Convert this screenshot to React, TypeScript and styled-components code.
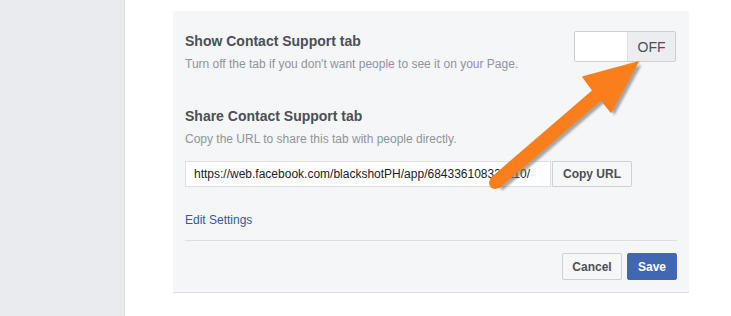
import React, { FC } from "react";
import styled, { createGlobalStyle } from "styled-components";

const GlobalStyle = createGlobalStyle`
  html, body {
    margin: 0;
    padding: 0;
    background: #fff;
    font-family: "Liberation Sans", Arial, Helvetica, sans-serif;
  }
`;

const Page = styled.div`
  position: relative;
  display: flex;
  width: 731px;
  height: 316px;
  overflow: hidden;
`;

const Sidebar = styled.div`
  width: 124px;
  flex-shrink: 0;
  background: #e9ebee;
  border-right: 1px solid #dddfe2;
`;

const Main = styled.div`
  padding: 11px 0 0 48px;
`;

const Panel = styled.div`
  width: 492px;
  padding: 20px 12px 12px;
  background: #f5f6f7;
  border-bottom: 1px solid #dddfe2;
`;

const Row = styled.div`
  display: flex;
  justify-content: space-between;
  align-items: flex-start;
`;

const Title = styled.div<{ $top?: number }>`
  margin-top: ${p => p.$top ?? 0}px;
  font-size: 14px;
  line-height: 18px;
  font-weight: bold;
  color: #4b4f56;
`;

const Hint = styled.div`
  margin-top: 6px;
  font-size: 12px;
  line-height: 16px;
  color: #90949c;
`;

const Toggle = styled.div`
  display: flex;
  height: 29px;
  border: 1px solid #ccd0d5;
  border-radius: 2px;
  overflow: hidden;
  margin-right: 1px;
`;

const ToggleHalf = styled.div<{ $off?: boolean }>`
  width: ${p => (p.$off ? 47 : 52)}px;
  background: ${p => (p.$off ? "#ebedf0" : "#fff")};
  border-left: ${p => (p.$off ? "1px solid #dddfe2" : "none")};
  display: flex;
  align-items: center;
  justify-content: center;
  font-size: 14px;
  color: #4b4f56;
`;

const UrlRow = styled.div`
  display: flex;
  margin-top: 14px;
  height: 26px;
`;

const UrlInput = styled.div`
  width: 348px;
  border: 1px solid #dddfe2;
  background: #fff;
  padding: 0 8px;
  display: flex;
  align-items: center;
  font-size: 12px;
  color: #1d2129;
  white-space: nowrap;
  overflow: hidden;
`;

const Button = styled.div<{ $primary?: boolean; $width: number }>`
  box-sizing: border-box;
  width: ${p => p.$width}px;
  display: flex;
  align-items: center;
  justify-content: center;
  white-space: nowrap;
  border: 1px solid ${p => (p.$primary ? "#4267b2" : "#ced0d4")};
  border-radius: 2px;
  background: ${p => (p.$primary ? "#4267b2" : "#f6f7f9")};
  color: ${p => (p.$primary ? "#fff" : "#4b4f56")};
  font-size: 12px;
  font-weight: bold;
`;

const CopyButton = styled(Button)`
  margin-left: 1px;
  border-radius: 0 2px 2px 0;
`;

const Link = styled.div`
  margin-top: 25px;
  font-size: 12px;
  line-height: 16px;
  color: #365899;
`;

const Divider = styled.div`
  margin-top: 12px;
  height: 1px;
  background: #dddfe2;
`;

const Footer = styled.div`
  display: flex;
  justify-content: flex-end;
  gap: 5px;
  margin-top: 12px;
  height: 27px;
`;

const Overlay = styled.svg`
  position: absolute;
  left: 0;
  top: 0;
  pointer-events: none;
`;

const arrow = "638,62 583,77 593,90.5 491,178.5 499,187.5 601,99.5 611,112";

const Arrow: FC = () => (
  <Overlay width={731} height={316} viewBox="0 0 731 316">
    <defs>
      <filter id="soft" x="-10%" y="-10%" width="120%" height="120%">
        <feGaussianBlur stdDeviation="1.2" />
      </filter>
    </defs>
    <polygon points={arrow} fill="#6f6f6f" opacity={0.6} transform="translate(3.5,3)" filter="url(#soft)" />
    <polygon points={arrow} fill="#fa7f1c" stroke="#fa7f1c" strokeWidth={1.5} strokeLinejoin="round" />
    <circle cx={495} cy={183} r={6} fill="#fa7f1c" />
  </Overlay>
);

const App: FC = () => (
  <>
    <GlobalStyle />
    <Page>
      <Sidebar />
      <Main>
        <Panel>
          <Row>
            <div>
              <Title $top={1}>Show Contact Support tab</Title>
              <Hint>Turn off the tab if you don't want people to see it on your Page.</Hint>
            </div>
            <Toggle>
              <ToggleHalf />
              <ToggleHalf $off>OFF</ToggleHalf>
            </Toggle>
          </Row>
          <Title $top={35}>Share Contact Support tab</Title>
          <Hint>Copy the URL to share this tab with people directly.</Hint>
          <UrlRow>
            <UrlInput>https://web.facebook.com/blackshotPH/app/684336108334110/</UrlInput>
            <CopyButton $width={80}>Copy URL</CopyButton>
          </UrlRow>
          <Link>Edit Settings</Link>
          <Divider />
          <Footer>
            <Button $width={60}>Cancel</Button>
            <Button $primary $width={50}>Save</Button>
          </Footer>
        </Panel>
      </Main>
      <Arrow />
    </Page>
  </>
);

export default App;
